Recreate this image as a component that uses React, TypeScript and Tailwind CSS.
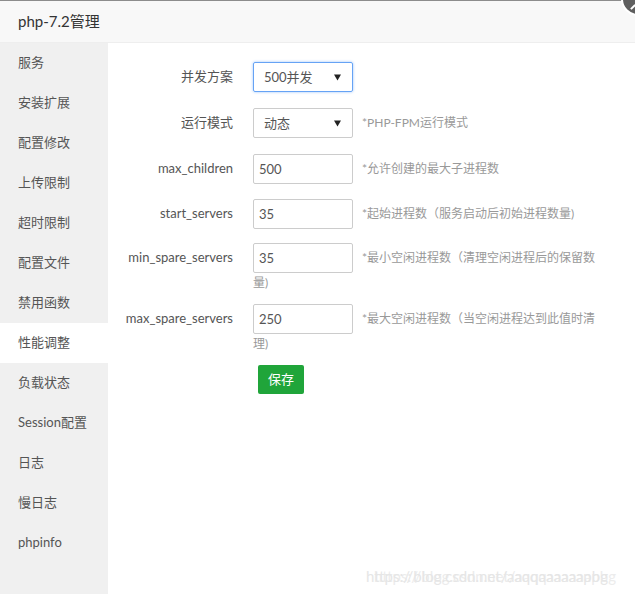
import React from 'react';

const menuItems = [
  '服务',
  '安装扩展',
  '配置修改',
  '上传限制',
  '超时限制',
  '配置文件',
  '禁用函数',
  '性能调整',
  '负载状态',
  'Session配置',
  '日志',
  '慢日志',
  'phpinfo',
];

type Row = {
  label: string;
  kind: 'select' | 'input';
  value: string;
  help?: string;
  focused?: boolean;
  gap: string;
};

const rows: Row[] = [
  { label: '并发方案', kind: 'select', value: '500并发', focused: true, gap: 'mb-[16px]' },
  { label: '运行模式', kind: 'select', value: '动态', help: '*PHP-FPM运行模式', gap: 'mb-[16px]' },
  { label: 'max_children', kind: 'input', value: '500', help: '*允许创建的最大子进程数', gap: 'mb-[15px]' },
  { label: 'start_servers', kind: 'input', value: '35', help: '*起始进程数（服务启动后初始进程数量)', gap: 'mb-[14px]' },
  { label: 'min_spare_servers', kind: 'input', value: '35', help: '*最小空闲进程数（清理空闲进程后的保留数量)', gap: 'mb-[13px]' },
  { label: 'max_spare_servers', kind: 'input', value: '250', help: '*最大空闲进程数（当空闲进程达到此值时清理)', gap: 'mb-[13px]' },
];

const Caret = () => (
  <svg width="7" height="7" viewBox="0 0 7 7" className="mr-[11px]">
    <path d="M0 0.5 L7 0.5 L3.5 6.5 Z" fill="#222" />
  </svg>
);

const App: React.FC = () => {
  return (
    <div
      className="relative w-[635px] h-[594px] overflow-hidden bg-white"
      style={{ fontFamily: 'Lato, "Microsoft YaHei", "Noto Sans CJK SC", sans-serif' }}
    >
      {/* title */}
      <div className="h-[43px] bg-[#f8f8f8] border-t border-[#8c8c8c] border-b border-b-[#eeeeee] pl-[18px] flex items-center text-[15px] text-[#333]">
        php-7.2管理
      </div>

      <div className="flex h-[551px]">
        {/* side menu */}
        <div className="w-[108px] bg-[#f0f0f0] shrink-0">
          {menuItems.map((m) => (
            <div
              key={m}
              className={`h-10 pl-[18px] flex items-center text-[13px] text-[#555] ${m === '性能调整' ? 'bg-white' : ''}`}
            >
              {m}
            </div>
          ))}
        </div>

        {/* form */}
        <div className="flex-1 pt-[19px]">
          {rows.map((r) => (
            <div key={r.label} className={`flex items-start ${r.gap}`}>
              <div className="w-[125px] mr-[20px] h-[30px] flex items-center justify-end text-[13px] text-[#555] shrink-0">
                {r.label}
              </div>
              <div className="w-[350px] leading-[18px] text-[12px] text-[#999]">
                {r.kind === 'select' ? (
                  <span
                    className={`inline-flex align-middle w-[100px] h-[30px] items-center justify-between rounded-[2px] border text-[13px] text-[#555] pl-[10px] ${
                      r.focused ? 'border-[#66a3f5] shadow-[0_0_3px_#9cc4fa]' : 'border-[#cccccc]'
                    }`}
                  >
                    {r.value}
                    <Caret />
                  </span>
                ) : (
                  <span className="inline-flex align-middle w-[100px] h-[30px] items-center rounded-[2px] border border-[#cccccc] text-[13px] text-[#555] pl-[5px]">
                    {r.value}
                  </span>
                )}
                {r.help && <span className="ml-[9px] relative top-[1px]">{r.help}</span>}
              </div>
            </div>
          ))}
          <div className="pl-[150px]">
            <button className="w-[46px] h-[29px] bg-[#20a53a] text-white text-[13px] rounded-[2px]">
              保存
            </button>
          </div>
        </div>
      </div>

      {/* layer close button, mostly off-screen */}
      <div className="absolute left-[621px] top-[-18px] w-[34px] h-[34px] rounded-full bg-[#5f5f5f] border-[2px] border-white">
        <div className="absolute left-[7px] top-[22px] w-[6px] h-[2px] bg-white rotate-[-45deg]" />
      </div>

      {/* watermark */}
      <div className="absolute left-[366px] top-[565px] text-[15px] text-[#e6e6e6] whitespace-nowrap [text-shadow:8px_0_0_#ececec]">
        https://blog.csdn.net/aaqqaaaaaapbg
      </div>
    </div>
  );
};

export default App;
